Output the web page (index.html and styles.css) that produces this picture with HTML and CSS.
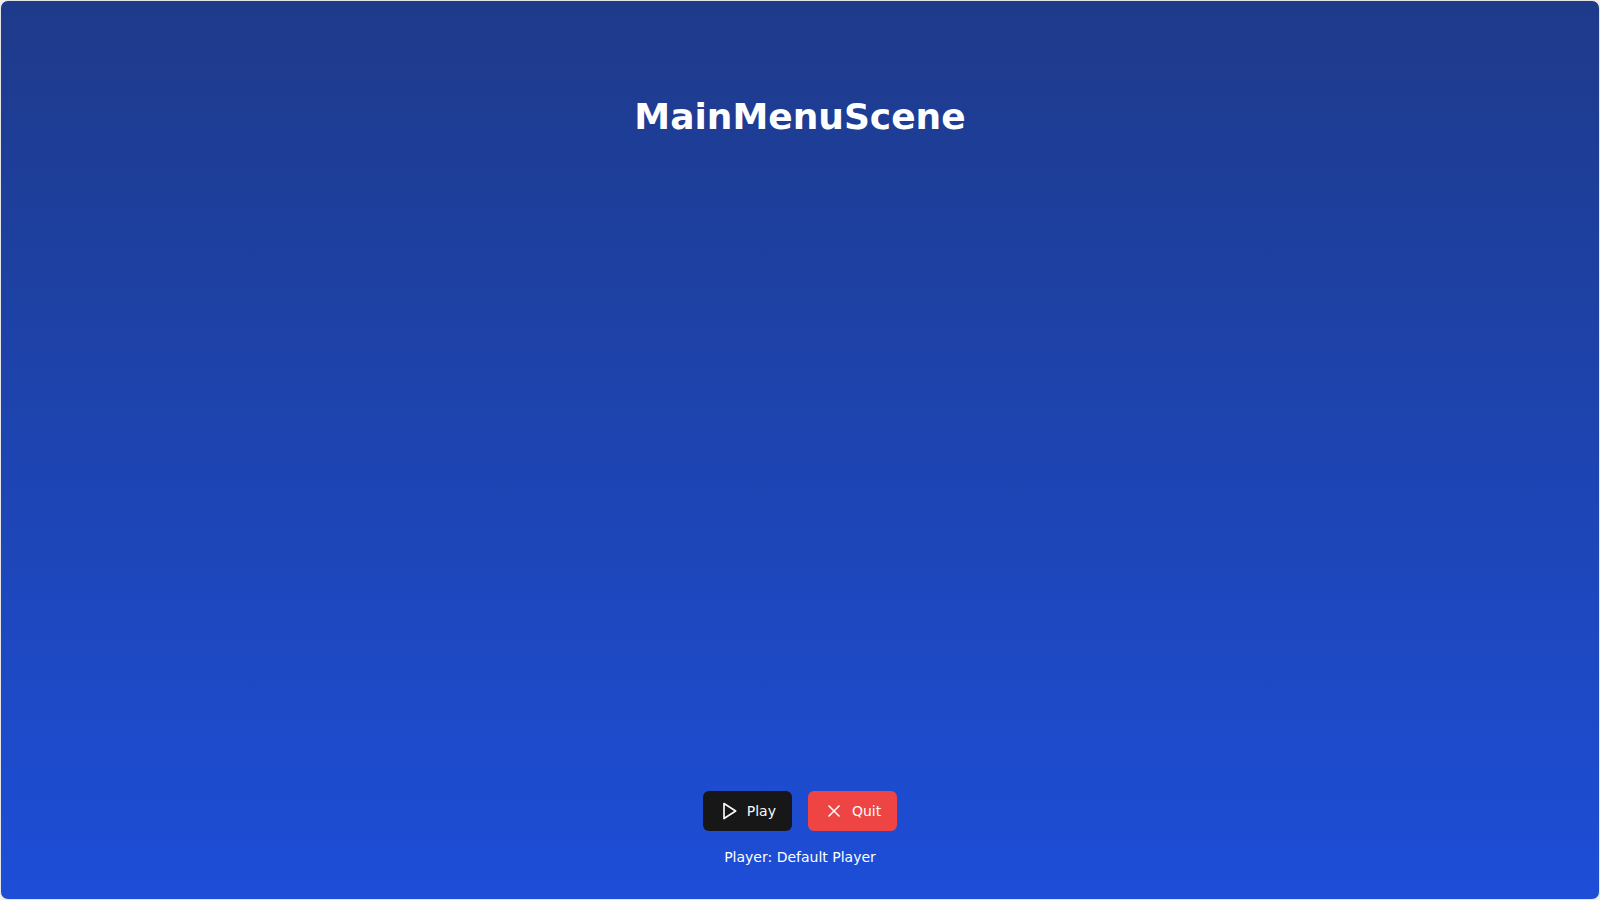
FILE: index.html
```html
<!DOCTYPE html>
<html lang="en">
<head>
<meta charset="utf-8">
<title>MainMenuScene</title>
<link rel="stylesheet" href="styles.css">
</head>
<body>
<main class="card">
  <h1 class="title">MainMenuScene</h1>
  <div class="menu">
    <div class="actions">
      <button class="button play" type="button">
        <svg class="icon" viewBox="0 0 24 24" aria-hidden="true"><polygon points="6 3 20 12 6 21 6 3"/></svg>
        Play
      </button>
      <button class="button quit" type="button">
        <svg class="icon" viewBox="0 0 24 24" aria-hidden="true"><path d="M18 6 6 18"/><path d="m6 6 12 12"/></svg>
        Quit
      </button>
    </div>
    <p class="player">Player: Default Player</p>
  </div>
</main>
</body>
</html>
```

FILE: styles.css
```css
* {
  box-sizing: border-box;
}

body {
  margin: 0;
  background: #f0f0f0;
  font-family: "DejaVu Sans", sans-serif;
}

.card {
  display: flex;
  flex-direction: column;
  align-items: center;
  justify-content: space-between;
  min-height: 100vh;
  padding: 96px 32px 32px;
  border: 1px solid #e5e5e5;
  border-radius: 8px;
  background: linear-gradient(to bottom, #1e3a8a, #1d4ed8);
  color: #fff;
}

.title {
  margin: 0;
  font-size: 36px;
  line-height: 40px;
  font-weight: 700;
}

.menu {
  display: flex;
  flex-direction: column;
  align-items: center;
  gap: 16px;
}

.actions {
  display: flex;
  gap: 16px;
}

.button {
  display: flex;
  align-items: center;
  gap: 8px;
  height: 40px;
  padding: 0 16px;
  border: 0;
  border-radius: 6px;
  color: #fafafa;
  font-family: inherit;
  font-size: 14px;
  line-height: 20px;
  font-weight: 500;
}

.play {
  background: #171717;
}

.quit {
  background: #ef4444;
}

.icon {
  width: 20px;
  height: 20px;
  fill: none;
  stroke: currentColor;
  stroke-width: 2;
  stroke-linecap: round;
  stroke-linejoin: round;
}

.player {
  margin: 0;
  font-size: 14px;
  line-height: 20px;
}
```
